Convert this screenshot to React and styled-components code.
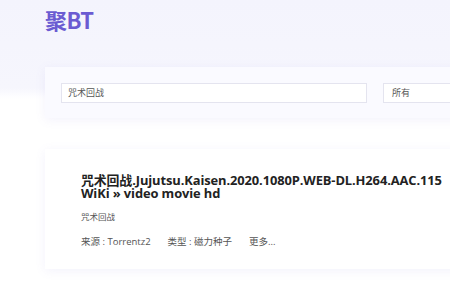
import React from "react";
import styled, { createGlobalStyle } from "styled-components";

const Global = createGlobalStyle`
  html, body { margin: 0; padding: 0; overflow: hidden; background: #fff; }
  body { font-family: "Open Sans", "Noto Sans CJK SC", sans-serif; }
`;

const Page = styled.div`
  width: 450px;
  height: 300px;
  background: linear-gradient(180deg, #f4f4fd 0px, #f6f6fd 88px, #fdfdff 96px, #ffffff 100px);
  padding-left: 45px;
  box-sizing: border-box;
  overflow: hidden;
`;

const Logo = styled.div`
  height: 40px;
  padding-top: 4px;
  font-family: "Noto Sans CJK SC", "Open Sans", sans-serif;
  font-weight: 700;
  font-size: 22px;
  line-height: 30px;
  color: #6b5bd2;
  letter-spacing: -0.5px;
`;

const Card = styled.div`
  width: 440px;
  flex-shrink: 0;
  background: ${(p) => p.$bg || "#fff"};
  box-shadow: 0 2px 10px rgba(120, 110, 220, 0.09);
  box-sizing: border-box;
`;

const SearchCard = styled(Card)`
  margin-top: 23px;
  padding: 16px;
  display: flex;
  gap: 16px;
  height: 51px;
`;

const Field = styled.div`
  width: ${(p) => p.$w}px;
  flex-shrink: 0;
  height: 20px;
  background: #fff;
  border: 1px solid #e4e4ef;
  box-sizing: border-box;
  padding-left: ${(p) => p.$pad}px;
  font-family: "Noto Sans CJK SC", sans-serif;
  font-size: 9px;
  line-height: 18px;
  color: #555;
`;

const ResultCard = styled(Card)`
  margin-top: 31px;
  padding: 25px 36px 0 36px;
  height: 120px;
`;

const Title = styled.div`
  width: 380px;
  font-family: "Open Sans", "Noto Sans CJK SC", sans-serif;
  font-weight: 700;
  font-size: 12.9px;
  line-height: 13px;
  color: #222;
  letter-spacing: -0.1px;
`;

const Sub = styled.div`
  margin-top: 10px;
  font-family: "Noto Sans CJK SC", sans-serif;
  font-size: 8.5px;
  color: #555;
`;

const Meta = styled.div`
  margin-top: 12px;
  display: flex;
  gap: 17px;
  font-family: "Open Sans", "Noto Sans CJK SC", sans-serif;
  font-size: 9.5px;
  color: #555;
`;

export default function App() {
  return (
    <>
      <Global />
      <Page>
        <Logo>聚BT</Logo>
        <SearchCard $bg="#fafaff">
          <Field $w={306} $pad={6}>咒术回战</Field>
          <Field $w={120} $pad={8}>所有</Field>
        </SearchCard>
        <ResultCard>
          <Title>咒术回战.Jujutsu.Kaisen.2020.1080P.WEB-DL.H264.AAC.115 WiKi » video movie hd</Title>
          <Sub>咒术回战</Sub>
          <Meta>
            <span>来源 : Torrentz2</span>
            <span>类型 : 磁力种子</span>
            <span>更多...</span>
          </Meta>
        </ResultCard>
      </Page>
    </>
  );
}
